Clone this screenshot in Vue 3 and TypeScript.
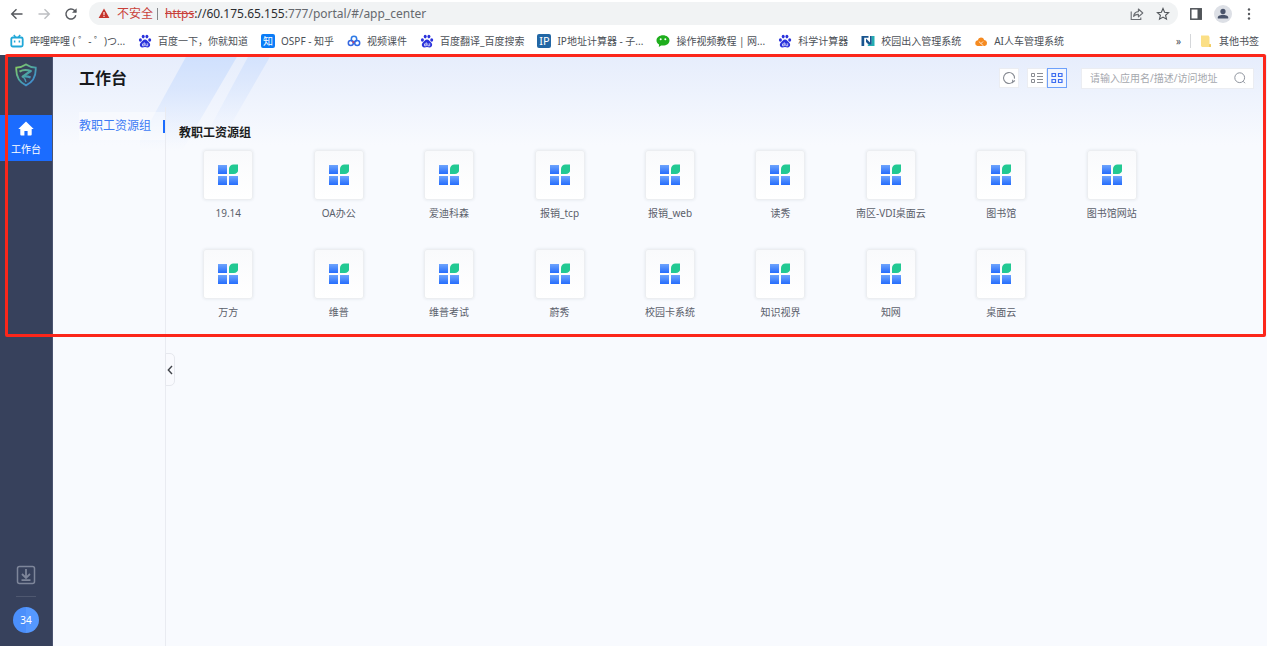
<script setup lang="ts">
import { ref } from 'vue'

interface Bookmark {
  icon: string
  label: string
}

const bookmarks: Bookmark[] = [
  { icon: 'tv', label: '哔哩哔哩 ( ゜- ゜)つ...' },
  { icon: 'paw', label: '百度一下，你就知道' },
  { icon: 'zhi', label: 'OSPF - 知乎' },
  { icon: 'pan', label: '视频课件' },
  { icon: 'paw', label: '百度翻译_百度搜索' },
  { icon: 'ip', label: 'IP地址计算器 - 子...' },
  { icon: 'chat', label: '操作视频教程 | 网...' },
  { icon: 'paw', label: '科学计算器' },
  { icon: 'gate', label: '校园出入管理系统' },
  { icon: 'cloud', label: 'AI人车管理系统' },
]

const apps: string[] = [
  '19.14', 'OA办公', '爱迪科森', '报销_tcp', '报销_web', '读秀', '南区-VDI桌面云', '图书馆', '图书馆网站',
  '万方', '维普', '维普考试', '蔚秀', '校园卡系统', '知识视界', '知网', '桌面云',
]

const view = ref<'list' | 'grid'>('grid')
const keyword = ref('')
</script>

<template>
  <div class="window">
    <header class="toolbar">
      <nav class="nav">
        <button type="button" aria-label="后退">
          <svg width="14" height="14" viewBox="0 0 14 14" fill="none" stroke="#55585d" stroke-width="1.4"><path d="M12.5 7H2M6.5 2.2L1.7 7l4.8 4.8" /></svg>
        </button>
        <button type="button" aria-label="前进">
          <svg width="14" height="14" viewBox="0 0 14 14" fill="none" stroke="#bdbfc2" stroke-width="1.4"><path d="M1.5 7H12M7.5 2.2L12.3 7l-4.8 4.8" /></svg>
        </button>
        <button type="button" aria-label="重新加载">
          <svg width="14" height="14" viewBox="0 0 14 14" fill="none" stroke="#55585d" stroke-width="1.4"><path d="M11.8 8.3A5 5 0 1 1 10.6 3.6L12 5" /><path d="M12.6 1.2v4.6H8z" fill="#55585d" stroke="none" /></svg>
        </button>
      </nav>
      <div class="address">
        <svg class="warn" width="12" height="11" viewBox="0 0 12 11"><path d="M6 .6L11.4 10H.6z" fill="#c5332b" /><path d="M6 4v3M6 7.8v1.1" stroke="#fff" stroke-width="1.1" /></svg>
        <span class="unsafe">不安全</span>
        <span class="bar"></span>
        <span class="url"><s>https</s><span class="host">://60.175.65.155</span>:777/portal/#/app_center</span>
        <button class="share" type="button" aria-label="分享">
          <svg width="14" height="14" viewBox="0 0 14 14" fill="none" stroke="#6a6d72" stroke-width="1.1"><path d="M1.2 4.5v8h9.6v-2" /><path d="M3.6 9.4C4 6.2 5.6 4.8 8.4 4.6V2l4.4 4-4.4 3.8V7.4C6.2 7.3 4.8 8 3.6 9.4z" stroke-linejoin="round" /></svg>
        </button>
        <button type="button" aria-label="收藏">
          <svg width="14" height="14" viewBox="0 0 14 14" fill="none" stroke="#505459" stroke-width="1.1"><path d="M7 1.5l1.6 3.7 4 .4-3 2.7.9 3.9L7 10.1l-3.5 2.1.9-3.9-3-2.7 4-.4z" /></svg>
        </button>
      </div>
      <button class="tool" type="button" aria-label="侧边栏">
        <svg width="12" height="12" viewBox="0 0 12 12"><rect x=".8" y=".8" width="10.4" height="10.4" fill="none" stroke="#505459" stroke-width="1.5" /><rect x="7.5" y="1" width="4" height="10" fill="#505459" /></svg>
      </button>
      <button class="tool" type="button" aria-label="个人资料">
        <svg width="18" height="18" viewBox="0 0 18 18"><circle cx="9" cy="9" r="9" fill="#dde0e6" /><circle cx="9" cy="6.4" r="2.6" fill="#49536a" /><path d="M3.8 13.6v-1.2c0-1.7 3.2-2.6 5.2-2.6s5.2.9 5.2 2.6v1.2z" fill="#49536a" /></svg>
      </button>
      <button class="tool" type="button" aria-label="菜单">
        <svg width="12" height="14" viewBox="0 0 12 14" fill="#55585d"><circle cx="6" cy="2.5" r="1.2" /><circle cx="6" cy="7" r="1.2" /><circle cx="6" cy="11.5" r="1.2" /></svg>
      </button>
    </header>

    <nav class="bookmarks" aria-label="书签">
      <a v-for="b in bookmarks" :key="b.label" href="#" class="bookmark">
        <svg v-if="b.icon === 'tv'" width="14" height="14" viewBox="0 0 14 14" fill="none" stroke="#20a7d8" stroke-width="1.8"><rect x="1.3" y="3.5" width="11.4" height="9" rx="1.5" /><path d="M3.8 1l1.7 2M10.2 1L8.5 3M4.6 6.6v2M9.4 6.6v2" stroke-width="1.5" /></svg>
        <svg v-else-if="b.icon === 'paw'" width="14" height="14" viewBox="0 0 14 14" fill="#2a32dc"><ellipse cx="2.4" cy="6" rx="1.5" ry="1.7" /><ellipse cx="5.2" cy="2.6" rx="1.5" ry="1.8" /><ellipse cx="8.9" cy="2.6" rx="1.5" ry="1.8" /><ellipse cx="11.7" cy="6" rx="1.5" ry="1.7" /><path d="M7 5.4c1.8 0 2.6 1.9 4.1 3.1 1.9 1.6 1.1 4.9-1.3 4.9-1.1 0-1.8-.3-2.8-.3s-1.7.3-2.8.3c-2.4 0-3.2-3.3-1.3-4.9C4.4 7.3 5.2 5.4 7 5.4z" /><path d="M6.3 8.3v3.5H4.5V9.9h1.8M7.8 9.3v2.5h1.9V9.3" fill="none" stroke="#fff" stroke-width=".7" /></svg>
        <span v-else-if="b.icon === 'zhi'" class="badge zhi">知</span>
        <svg v-else-if="b.icon === 'pan'" width="14" height="14" viewBox="0 0 14 14" fill="none" stroke-width="1.5"><circle cx="7" cy="5" r="2.7" stroke="#2f7be6" /><circle cx="3.8" cy="9" r="2.5" stroke="#3567e0" /><circle cx="10.2" cy="9" r="2.5" stroke="#2f6be6" /><path d="M5.5 7.5L7 8.6" stroke="#e3405a" /></svg>
        <span v-else-if="b.icon === 'ip'" class="badge ip">IP</span>
        <svg v-else-if="b.icon === 'chat'" width="14" height="14" viewBox="0 0 14 14"><path d="M7 1.3c3.5 0 6.5 2.2 6.5 5.2S10.5 11.6 7 11.6c-.7 0-1.3-.1-1.9-.2L2.8 13l.3-2.5C1.4 9.5.5 8.1.5 6.5c0-3 3-5.2 6.5-5.2z" fill="#1fae1d" /><circle cx="4.7" cy="5.2" r="1" fill="#fff" /><circle cx="9.3" cy="5.2" r="1" fill="#fff" /></svg>
        <svg v-else-if="b.icon === 'gate'" width="14" height="14" viewBox="0 0 14 14"><path d="M.5 2h7v1.8H3.2V12H.5z" fill="#19558f" /><path d="M5 4.500l4 4V2h1.800v10H9L5 8z" fill="#19558f" /><path d="M10.800 2h2.700v10H6.800v-1.500h4z" fill="#24adb3" /></svg>
        <svg v-else width="14" height="14" viewBox="0 0 14 14"><path d="M3.8 6.2a3.3 3.3 0 0 1 6.4-.2 3 3 0 0 1 .6 5.9H3.4a2.9 2.9 0 0 1 .4-5.7z" fill="#f58a20" /><path d="M4.8 7.5L9.6 12M7 9.5L9 7.500" stroke="#fff" stroke-width=".8" fill="none" /></svg>
        <span>{{ b.label }}</span>
      </a>
      <button class="more" type="button" aria-label="更多书签">»</button>
      <a href="#" class="bookmark other">
        <svg width="14" height="14" viewBox="0 0 14 14"><path d="M2 1.5h7.5l1 1.5V10H12v3H3L2 12z" fill="#fbdf85" /><path d="M10 10.2h2V13h-2z" fill="#f2cc62" /></svg>
        <span>其他书签</span>
      </a>
    </nav>

    <div class="portal">
      <aside class="sidebar">
        <svg class="logo" width="22" height="24" viewBox="0 0 22 24" fill="none">
          <defs>
            <linearGradient id="shield" x1="0" y1="0" x2="22" y2="24" gradientUnits="userSpaceOnUse"><stop offset="0" stop-color="#9ad94f" /><stop offset=".5" stop-color="#4aa3a8" /><stop offset="1" stop-color="#3c7fe8" /></linearGradient>
          </defs>
          <path d="M11 1.400c2.800 1.900 5.500 2.900 9.700 3.200.5 8.500-2 14.300-9.700 17.800C3.300 18.900.8 13.100 1.300 4.600 5.500 4.300 8.200 3.300 11 1.400z" stroke="url(#shield)" stroke-width="1.800" />
          <path d="M4.500 8.600c3.500-2 7.500-2 11.300-.6L7.600 13.600c2.800-.5 5.600-.2 8 .9" stroke="url(#shield)" stroke-width="2.200" stroke-linejoin="round" />
          <path d="M7.600 13.600c1.600 1.200 2.800 3 3.400 5.600" stroke="url(#shield)" stroke-width="1.200" />
        </svg>
        <a href="#" class="side-item">
          <svg width="16" height="15" viewBox="0 0 16 15"><path d="M8 .4L15.7 8h-2v5.6a1 1 0 0 1-1 1H9.6V10H6.4v4.6H3.3a1 1 0 0 1-1-1V8h-2z" fill="#fff" /></svg>
          <span>工作台</span>
        </a>
        <div class="side-foot">
          <button type="button" aria-label="下载">
            <svg width="20" height="20" viewBox="0 0 20 20" fill="none" stroke="#7e869a"><rect x="1.5" y="1.5" width="17" height="17" rx="2" stroke-width="1.5" /><path d="M10 4v8.5M6 9l4 4 4-4M5.5 15.2h9" stroke-width="1.8" /></svg>
          </button>
          <hr />
          <button type="button" class="avatar">34</button>
        </div>
      </aside>

      <main class="main">
        <svg class="rays" width="180" height="100" viewBox="0 0 180 100">
          <defs>
            <linearGradient id="ray" x1="0" y1="0" x2="0" y2="1"><stop offset="0" stop-color="#cfe0fd" /><stop offset=".35" stop-color="#d6e4fd" stop-opacity=".85" /><stop offset="1" stop-color="#e4edfd" stop-opacity="0" /></linearGradient>
            <linearGradient id="ray2" x1="0" y1="0" x2="0" y2="1"><stop offset="0" stop-color="#d3e2fd" /><stop offset=".35" stop-color="#dbe7fd" stop-opacity=".85" /><stop offset="1" stop-color="#e4edfd" stop-opacity="0" /></linearGradient>
          </defs>
          <path d="M47 0H98L42 96H-6z" fill="url(#ray)" />
          <path d="M109 0h22L85 80H66z" fill="url(#ray2)" />
        </svg>
        <div class="head">
          <h1>工作台</h1>
          <button type="button" class="refresh" aria-label="刷新">
            <svg width="14" height="14" viewBox="0 0 14 14" fill="none" stroke="#878b93" stroke-width="1.1"><path d="M10.6 11.2A5.5 5.5 0 1 1 12.5 7.6" /><path d="M12.9 9.5l-2.3 1.9.1-2.6" /></svg>
          </button>
          <div class="switch">
            <button type="button" aria-label="列表视图" :class="{ on: view === 'list' }" @click="view = 'list'">
              <svg width="12" height="12" viewBox="0 0 12 12" fill="none" stroke="currentColor"><path d="M.5 1.500h3v3h-3zM.5 7.500h3v3h-3zM6 1.500h6M6 4.500h6M6 7.500h6M6 10.500h6" /></svg>
            </button>
            <button type="button" aria-label="网格视图" :class="{ on: view === 'grid' }" @click="view = 'grid'">
              <svg width="12" height="12" viewBox="0 0 12 12" fill="none" stroke="currentColor" stroke-width="1.200"><path d="M1 1.500h3.500v3H1zM7.500 1.500H11v3H7.500zM1 7.500h3.500v3H1zM7.500 7.500H11v3H7.500z" /></svg>
            </button>
          </div>
          <label class="search">
            <input v-model="keyword" type="text" placeholder="请输入应用名/描述/访问地址" aria-label="搜索应用" />
            <svg width="12" height="12" viewBox="0 0 12 12" fill="none" stroke="#8f949e" stroke-width="1"><circle cx="5.7" cy="5.7" r="4.9" /><path d="M9 9.2l2 2" /></svg>
          </label>
        </div>

        <div class="body">
          <div class="groups">
            <a href="#" class="group">教职工资源组</a>
            <button type="button" class="fold" aria-label="收起">
              <svg width="6" height="10" viewBox="0 0 6 10" fill="none" stroke="#41444a" stroke-width="1.4"><path d="M5 1L1.3 5 5 9" /></svg>
            </button>
          </div>
          <section class="content">
            <h2>教职工资源组</h2>
            <div class="grid">
              <a v-for="name in apps" :key="name" href="#" class="app">
                <span class="tile">
                  <svg width="20" height="22" viewBox="0 0 20 22">
                    <defs>
                      <linearGradient id="sq" x1="0" y1="0" x2="0" y2="1"><stop offset="0" stop-color="#6ea4fd" /><stop offset="1" stop-color="#256dfd" /></linearGradient>
                    </defs>
                    <rect x="0" y="1" width="9" height="9" fill="url(#sq)" />
                    <rect x="0" y="12" width="9" height="9" fill="url(#sq)" />
                    <rect x="11" y="12" width="9" height="9" fill="url(#sq)" />
                    <path d="M11 10V5a4.500 4.500 0 0 1 4.500-4.500H19.500a.8.8 0 0 1 .8.8V5.500A4.500 4.500 0 0 1 15.800 10z" fill="#22c993" />
                  </svg>
                </span>
                <span class="name">{{ name }}</span>
              </a>
            </div>
          </section>
        </div>
      </main>
      <div class="highlight" aria-hidden="true"></div>
    </div>
  </div>
</template>

<style>
body {
  margin: 0;
}
</style>

<style scoped>
.window {
  display: flex;
  flex-direction: column;
  min-height: 100vh;
  background: #fff;
  color: #4b4f56;
  font-family: "Noto Sans", "Noto Sans CJK SC", sans-serif;
  font-size: 10px;
  line-height: 14px;
}
.window *,
.window *::before {
  box-sizing: border-box;
}
button {
  display: flex;
  align-items: center;
  justify-content: center;
  padding: 0;
  border: 0;
  background: none;
  color: inherit;
  font: inherit;
  cursor: pointer;
}
a {
  color: inherit;
  text-decoration: none;
}
svg {
  flex: none;
}
.toolbar {
  display: flex;
  align-items: center;
  height: 27px;
  padding-right: 12px;
}
.nav {
  display: flex;
  gap: 13px;
  padding: 0 11px 0 10px;
}
.address {
  display: flex;
  flex: 1;
  align-items: center;
  height: 23px;
  margin-right: 12px;
  padding: 0 8px 0 9px;
  border-radius: 12px;
  background: #f1f3f4;
  font-size: 12px;
  line-height: 18px;
}
.unsafe {
  margin-left: 7px;
  color: #c9413a;
}
.bar {
  width: 1px;
  height: 12px;
  margin: 0 7px 0 4px;
  background: #85888c;
}
.url {
  flex: 1;
  color: #66696e;
  white-space: nowrap;
}
.url s {
  color: #c9413a;
}
.host {
  color: #2c2e31;
}
.share {
  margin-right: 12px;
}
.tool + .tool {
  margin-left: 12px;
}
.tool:last-child {
  margin-left: 11px;
}
.bookmarks {
  display: flex;
  align-items: center;
  gap: 13px;
  height: 28px;
  padding: 0 8px 1px 10px;
  white-space: nowrap;
}
.bookmark {
  display: flex;
  align-items: center;
  gap: 6px;
}
.badge {
  display: flex;
  align-items: center;
  justify-content: center;
  width: 14px;
  height: 14px;
  border-radius: 2px;
  color: #fff;
}
.zhi {
  background: #0b7cf7;
}
.ip {
  background: #2267a5;
  font-size: 11px;
}
.more {
  margin-left: auto;
}
.other {
  margin-left: -4px;
  padding-left: 8px;
  border-left: 1px solid #d5d7da;
}
.portal {
  position: relative;
  display: flex;
  flex: 1;
}
.sidebar {
  display: flex;
  flex-direction: column;
  align-items: center;
  width: 53px;
  padding: 8px 0 13px;
  border-right: 1px solid #4b5470;
  background: #37415c;
}
.logo {
  margin-bottom: 28px;
}
.side-item {
  display: flex;
  flex-direction: column;
  align-items: center;
  gap: 6px;
  align-self: stretch;
  padding: 6px 0 5px;
  background: #1b6cff;
  color: #fff;
}
.side-foot {
  display: flex;
  flex-direction: column;
  align-items: center;
  margin-top: auto;
}
.side-foot hr {
  width: 20px;
  height: 1px;
  margin: 11px 0 10px;
  border: 0;
  background: #4f5870;
}
.avatar {
  width: 26px;
  height: 26px;
  border-radius: 50%;
  background: linear-gradient(90deg, #4b8ffb 50%, #5598ff 50%);
  color: #fff;
}
.main {
  position: relative;
  display: flex;
  flex: 1;
  flex-direction: column;
  min-width: 0;
  background: linear-gradient(#e6edfc, #f8fafe 90px);
}
.rays {
  position: absolute;
  top: 0;
  left: 87px;
}
.head {
  position: relative;
  display: flex;
  align-items: center;
  height: 52px;
  padding: 0 13px 6px 26px;
}
h1 {
  margin: 0 auto 0 0;
  color: #17191d;
  font-size: 16px;
  line-height: 24px;
}
.refresh {
  width: 20px;
  height: 20px;
  margin-right: 8px;
  border: 1px solid #ebedf2;
  background: #fff;
}
.switch {
  display: flex;
  margin-right: 14px;
}
.switch button {
  width: 20px;
  height: 20px;
  border: 1px solid #ebedf2;
  background: #fff;
  color: #8a8d93;
}
.switch .on {
  border-color: #6ea1fb;
  background: #f2f6ff;
  color: #3d6df0;
}
.search {
  display: flex;
  align-items: center;
  width: 173px;
  height: 21px;
  padding: 0 7px 0 8px;
  border: 1px solid #ebedf2;
  background: #fff;
}
.search input {
  flex: 1;
  min-width: 0;
  padding: 0;
  border: 0;
  outline: 0;
  background: none;
  font: inherit;
}
.search input::placeholder {
  color: #a5a8ae;
  opacity: 1;
}
.body {
  position: relative;
  display: flex;
  flex: 1;
}
.groups {
  position: relative;
  width: 113px;
  padding-top: 5px;
  border-right: 1px solid #e9ebf1;
}
.group {
  display: flex;
  align-items: center;
  justify-content: space-between;
  height: 28px;
  margin-left: 26px;
  background: rgba(255, 255, 255, 0.4);
  color: #3d7bf5;
  font-size: 12px;
  white-space: nowrap;
}
.group::after {
  width: 2px;
  height: 13px;
  background: #1b6cff;
  content: "";
}
.fold {
  position: absolute;
  top: 246px;
  left: 112px;
  width: 10px;
  height: 33px;
  border: 1px solid #e6e8ee;
  border-radius: 0 5px 5px 0;
  background: #f9fafe;
}
.content {
  flex: 1;
  min-width: 0;
  padding: 17px 100px 0 7px;
}
h2 {
  margin: 0 0 8px 6px;
  color: #1c1e22;
  font-size: 12px;
  line-height: 18px;
}
.grid {
  display: grid;
  grid-template-columns: repeat(9, 1fr);
  row-gap: 29px;
}
.app {
  display: flex;
  flex-direction: column;
  align-items: center;
  gap: 6px;
  white-space: nowrap;
}
.tile {
  display: flex;
  align-items: center;
  justify-content: center;
  width: 50px;
  height: 50px;
  border: 1px solid #eceef1;
  border-radius: 3px;
  background: linear-gradient(#f9fafc, #fff);
  box-shadow: 0 0 3px rgba(60, 70, 100, 0.12);
}
.name {
  color: #5b606b;
}
.highlight {
  position: absolute;
  top: -1px;
  right: 1px;
  left: 5px;
  height: 283px;
  box-sizing: border-box;
  border: 3px solid #fc261a;
  border-radius: 2px;
  pointer-events: none;
}
</style>
